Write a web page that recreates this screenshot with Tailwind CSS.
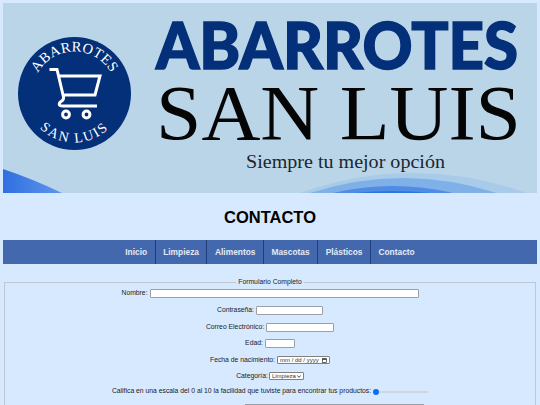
<!DOCTYPE html>
<html lang="es" class="overflow-hidden h-[405px]">
<head>
    <meta charset="UTF-8">
    <meta name="viewport" content="width=device-width, initial-scale=1.0">
    <title>Contacto - Abarrotes San Luis</title>
    <script src="https://cdn.jsdelivr.net/npm/@tailwindcss/browser@4"></script>
</head>
<body class="bg-[#d7e9fe] font-['Liberation_Sans',Arial,sans-serif] text-black overflow-hidden h-[405px]">
    <!-- Banner -->
    <div class="px-[3px] pt-[3px]">
        <svg class="block w-[534px] h-[190px]" viewBox="0 0 534 190">
            <defs>
                <linearGradient id="ola" x1="0" x2="1" y1="0" y2="0">
                    <stop offset="0" stop-color="#2f6fe0"/>
                    <stop offset="1" stop-color="#5f96ec"/>
                </linearGradient>
                <path id="arribaCirculo" d="M 29.5 90.5 A 42 42 0 0 1 113.5 90.5"/>
                <path id="abajoCirculo" d="M 22.5 90.5 A 49 49 0 0 0 120.5 90.5"/>
            </defs>
            <rect width="534" height="190" fill="#bad5e8"/>
            <!-- olas -->
            <path d="M0 166 Q30 176 59 190 L0 190 Z" fill="url(#ola)"/>
            <path d="M297 190 Q410 150 524 190 Z" fill="#a9cbea"/>
            <path d="M307 190 Q400 160 494 190 Z" fill="#7fb0e8"/>
            <path d="M330 190 Q390 176 450 190 Z" fill="#4f8ce4"/>
            <path d="M352 190 Q390 186 427 190 Z" fill="#2f74dc"/>
            <!-- logo -->
            <circle cx="71.5" cy="90.5" r="56.5" fill="#04307a"/>
            <text font-family="'Liberation Serif',serif" font-size="14.5" letter-spacing="0.3" fill="#fff"><textPath href="#arribaCirculo" startOffset="50%" text-anchor="middle">ABARROTES</textPath></text>
            <text font-family="'Liberation Serif',serif" font-size="14" letter-spacing="1.8" fill="#fff"><textPath href="#abajoCirculo" startOffset="50%" text-anchor="middle">SAN LUIS</textPath></text>
            <!-- carrito -->
            <path d="M46.5 66.5 H54 L60.5 94 Q61 97 58 98.5 Q55 101 57 102.5 Q58 103 60 103 H94 M56 73 H97 L92 92 H60" fill="none" stroke="#fff" stroke-width="3"/>
            <circle cx="63" cy="111.5" r="3.4" fill="#04307a" stroke="#fff" stroke-width="3"/>
            <circle cx="83.5" cy="111.5" r="3.4" fill="#04307a" stroke="#fff" stroke-width="3"/>
            <!-- titulo -->
            <text x="153" y="66" font-family="Lato,sans-serif" font-weight="900" font-size="65" fill="#04307a" stroke="#04307a" stroke-width="1.5" textLength="362" lengthAdjust="spacingAndGlyphs">ABARROTES</text>
            <text x="153" y="136" font-family="'Liberation Serif',serif" font-size="78" fill="#050505" textLength="365" lengthAdjust="spacingAndGlyphs">SAN LUIS</text>
            <text x="243" y="165" font-family="'Liberation Serif',serif" font-size="19" fill="#1c2530" textLength="199" lengthAdjust="spacingAndGlyphs">Siempre tu mejor opción</text>
        </svg>
    </div>

    <h1 class="text-center text-[16.5px] leading-[18px] font-bold mt-[15px]">CONTACTO</h1>

    <!-- Menu -->
    <nav class="mx-[3px] mt-[14px] h-[24px] bg-[#4368ad] flex justify-center text-[8.4px] font-bold text-[#e3eaf6]">
        <a href="#" class="px-[7.5px] flex items-center border-r border-[#1f3f7c]">Inicio</a>
        <a href="#" class="px-[7.5px] flex items-center border-r border-[#1f3f7c]">Limpieza</a>
        <a href="#" class="px-[7.5px] flex items-center border-r border-[#1f3f7c]">Alimentos</a>
        <a href="#" class="px-[7.5px] flex items-center border-r border-[#1f3f7c]">Mascotas</a>
        <a href="#" class="px-[7.5px] flex items-center border-r border-[#1f3f7c]">Plásticos</a>
        <a href="#" class="px-[7.5px] flex items-center">Contacto</a>
    </nav>

    <!-- Formulario -->
    <fieldset class="mx-[4px] mt-[14px] border border-[#bfc7d2] text-[6.8px] text-[#222]">
        <legend class="mx-auto px-[2px] leading-[8px]">Formulario Completo</legend>
        <div class="flex flex-col items-center">
            <div class="flex items-center gap-[2px] h-[17px] mt-[-1px]">
                <label>Nombre:</label>
                <input type="text" class="w-[269px] h-[9px] bg-white border border-[#9aa0a8] rounded-[1px]">
            </div>
            <div class="flex items-center gap-[2px] h-[17px]">
                <label>Contraseña:</label>
                <input type="password" class="w-[67px] h-[9px] bg-white border border-[#9aa0a8] rounded-[1px]">
            </div>
            <div class="flex items-center gap-[2px] h-[16px]">
                <label>Correo Electrónico:</label>
                <input type="email" class="w-[68px] h-[9px] bg-white border border-[#9aa0a8] rounded-[1px]">
            </div>
            <div class="flex items-center gap-[2px] h-[17px]">
                <label>Edad:</label>
                <input type="number" class="w-[30px] h-[9px] bg-white border border-[#9aa0a8] rounded-[1px]">
            </div>
            <div class="flex items-center gap-[2px] h-[16px]">
                <label>Fecha de nacimiento:</label>
                <div class="w-[53px] h-[8px] bg-white border border-[#808080] rounded-[1px] flex items-center justify-between px-[2px] text-[6px] leading-none text-[#333]">
                    <span>mm / dd / yyyy</span>
                    <svg class="w-[5px] h-[5px]" viewBox="0 0 6 6"><rect x="0.5" y="1" width="5" height="4.5" fill="none" stroke="#222" stroke-width="0.8"/><rect x="0.5" y="0.6" width="5" height="1.4" fill="#222"/></svg>
                </div>
            </div>
            <div class="flex items-center gap-[1px] h-[16px]">
                <label>Categoría:</label>
                <div class="w-[35px] h-[8px] bg-white border border-[#808080] rounded-[1px] flex items-center justify-between px-[2px] text-[6px] leading-none text-[#333]">
                    <span>Limpieza</span>
                    <svg class="w-[4px] h-[3px]" viewBox="0 0 4 3"><path d="M0.3 0.4 L2 2.4 L3.7 0.4" fill="none" stroke="#222" stroke-width="0.8"/></svg>
                </div>
            </div>
            <div class="flex items-center gap-[2px] h-[15px]">
                <label>Califica en una escala del 0 al 10 la facilidad que tuviste para encontrar tus productos:</label>
                <div class="w-[55px] h-[7px] flex items-center">
                    <span class="w-[6px] h-[6px] rounded-full bg-[#0b6ff0] shrink-0"></span>
                    <span class="flex-1 h-[2px] rounded-r-full bg-[#d0d6dd]"></span>
                </div>
            </div>
            <textarea class="block w-[179px] h-[40px] mt-[5px] ml-[129px] bg-white border border-[#9aa0a8]"></textarea>
        </div>
    </fieldset>
</body>
</html>
